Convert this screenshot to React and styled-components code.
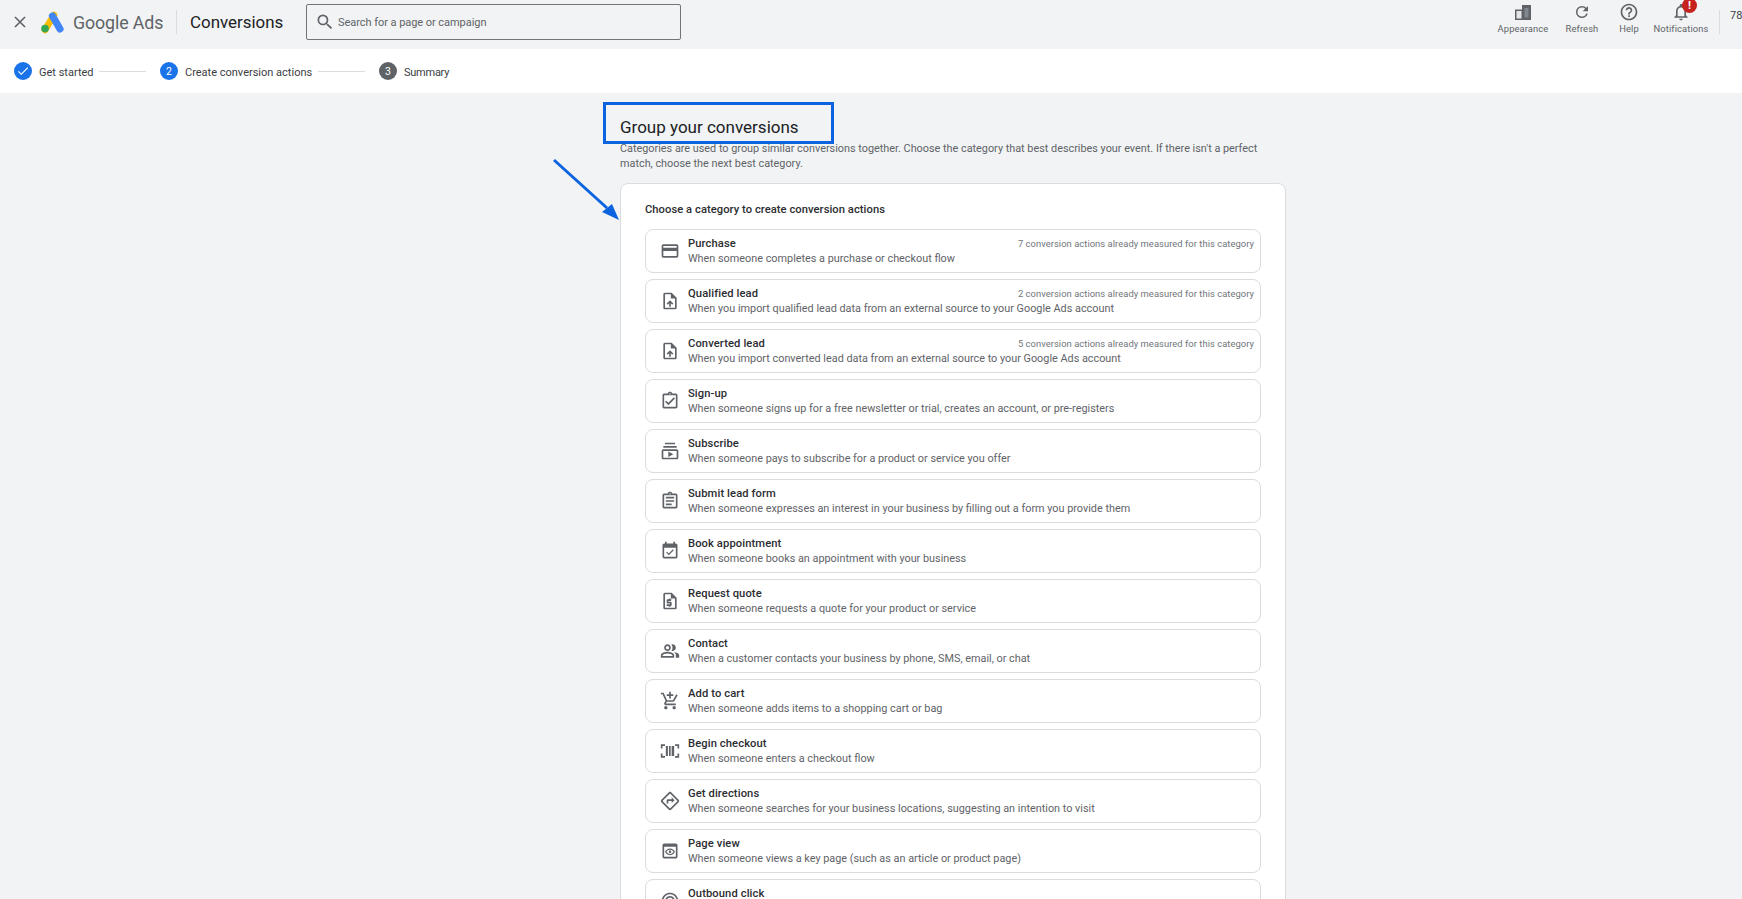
import React from "react";
import styled, { createGlobalStyle } from "styled-components";

const Global = createGlobalStyle`
  html, body { margin: 0; padding: 0; height: 100%; overflow: hidden; background: #f1f3f4; }
  body { font-family: Roboto, "Liberation Sans", sans-serif; color: #3c4043; }
  #root { height: 899px; overflow: hidden; position: relative; }
`;

const Page = styled.div`display: flex; flex-direction: column; height: 899px; overflow: hidden; position: relative;`;
const TopBar = styled.header`
  height: 49px; box-sizing: border-box; flex: none; display: flex; align-items: center; background: #f1f3f4; padding: 0 0 5px 12px;
`;
const CloseBtn = styled.span`display: flex; width: 16px; color: #5f6368; margin-right: 12px;`;
const LogoSlot = styled.span`display: flex; width: 24px; margin-right: 9px;`;
const Brand = styled.span`font-size: 17.8px; color: #5f6368; letter-spacing: -0.1px; width: 90px; white-space: nowrap;`;
const VRule = styled.span`width: 1px; height: 24px; background: #dadce0; margin: 0 13px;`;
const PageName = styled.span`font-size: 16.9px; color: #202124; width: 92px; white-space: nowrap;`;
const Search = styled.div`
  margin-left: 24px; width: 375px; height: 36px; box-sizing: border-box; border: 1px solid #70757a; border-radius: 2px;
  display: flex; align-items: center; padding-left: 8px; gap: 3px; font-size: 11px; letter-spacing: -0.05px; color: #5f6368;
`;
const Tools = styled.div`margin-left: auto; display: flex; align-items: flex-start; height: 44px;`;
const Tool = styled.div`
  position: relative; width: ${p => p.$w}px; display: flex; flex-direction: column; align-items: center;
  font-size: 9.4px; color: #5f6368; padding-top: 2px; white-space: nowrap; letter-spacing: 0.1px; gap: 1px;
`;
const ToolIcon = styled.span`display: flex; height: 20px; align-items: center;`;
const Badge = styled.span`
  position: absolute; top: -2px; left: 31px; width: 15px; height: 15px; border-radius: 50%; background: #c5221f; color: #fff;
  font-size: 11px; font-weight: 700; display: flex; align-items: center; justify-content: center;
`;
const ToolRule = styled.span`width: 1px; height: 24px; background: #dadce0; margin: 10px 10px 0 8px;`;
const Account = styled.span`font-size: 11px; line-height: 13px; color: #3c4043; padding-top: 9px; white-space: nowrap; width: 12px;`;

const Stepper = styled.nav`
  height: 44px; flex: none; background: #fff; display: flex; align-items: center; padding-left: 14px; font-size: 11px; color: #3c4043;
`;
const StepDot = styled.span`
  width: 18px; height: 18px; border-radius: 50%; background: ${p => p.$bg}; color: #fff; font-size: 10.5px;
  display: flex; align-items: center; justify-content: center; margin-right: 7px;
`;
const StepName = styled.span`white-space: nowrap; width: ${p => p.$w}px; letter-spacing: ${p => p.$ls || 0}px; position: relative; top: 1px;`;
const StepLine = styled.span`width: 47px; height: 1px; background: #dadce0; margin: 0 14px 0 6px;`;

const Main = styled.main`flex: 1; padding-left: 620px; width: 666px; position: relative;`;
const Title = styled.h1`
  margin: 23px 0 0; font-size: 17px; line-height: 22px; font-weight: 400; color: #202124; font-family: Roboto, sans-serif;
`;
const Lead = styled.p`margin: 3px 0 0; width: 666px; font-size: 10.85px; line-height: 15px; color: #5f6368;`;
const Card = styled.section`
  box-sizing: border-box; width: 666px; margin-top: 12px; background: #fff; border: 1px solid #dadce0; border-radius: 8px; padding: 18px 24px 24px;
`;
const CardTitle = styled.h2`margin: 0 0 11px; font-size: 11.2px; line-height: 16px; font-weight: 500; color: #2b2d30; letter-spacing: 0.05px;`;
const List = styled.div`display: flex; flex-direction: column; gap: 6px;`;
const Row = styled.div`
  box-sizing: border-box; height: 44px; border: 1px solid #dadce0; border-radius: 8px; display: flex; align-items: center; padding: 0 6px 0 14px; position: relative;
`;
const RowIcon = styled.span`display: flex; width: 20px; color: #5f6368; margin-right: 8px; flex: none;`;
const RowText = styled.div`flex: 1; min-width: 0;`;
const RowHead = styled.div`display: flex; justify-content: space-between; align-items: center; height: 15px;`;
const RowName = styled.span`font-size: 11.2px; font-weight: 500; color: #2b2d30; line-height: 15px; letter-spacing: 0.1px;`;
const RowNote = styled.span`font-size: 9.4px; color: #70757a; letter-spacing: 0.05px;`;
const RowDesc = styled.div`font-size: 10.85px; color: #5f6368; line-height: 15px;`;

const Callout = styled.div`
  position: absolute; left: 603px; top: 9px; width: 231px; height: 42px; box-sizing: border-box; border: 3px solid #0b63e0; pointer-events: none;
`;
const Arrow = styled.svg`position: absolute; left: 550px; top: 65px; pointer-events: none;`;

const Icon = ({ d, size = 20, fill = "currentColor" }) => (
  <svg width={size} height={size} viewBox="0 0 24 24" fill={fill}><path d={d} /></svg>
);

const ICONS = {
  card: "M20 4H4c-1.11 0-1.99.89-1.99 2L2 18c0 1.11.89 2 2 2h16c1.11 0 2-.89 2-2V6c0-1.11-.89-2-2-2zm0 14H4v-6h16v6zm0-10H4V6h16v2z",
  upload: "M14 2H6c-1.1 0-1.99.9-1.99 2L4 20c0 1.1.89 2 1.99 2H18c1.1 0 2-.9 2-2V8l-6-6zm4 18H6V4h7v5h5v11zM8 15.01l1.41 1.41L11 14.84V19h2v-4.16l1.59 1.59L16 15.01 12.01 11z",
  signup: "M18 9l-1.41-1.42L10 14.17l-2.59-2.58L6 13l4 4zm1-6h-4.18C14.4 1.84 13.3 1 12 1c-1.3 0-2.4.84-2.82 2H5c-.14 0-.27.01-.4.04-.39.08-.74.28-1.01.55-.18.18-.33.4-.43.64-.1.23-.16.49-.16.77v14c0 .27.06.54.16.78s.25.45.43.64c.27.27.62.47 1.01.55.13.02.26.03.4.03h14c1.1 0 2-.9 2-2V5c0-1.1-.9-2-2-2zm-7-.25c.41 0 .75.34.75.75s-.34.75-.75.75-.75-.34-.75-.75.34-.75.75-.75zM19 19H5V5h14v14z",
  subs: "M4 6h16v2H4zm2-4h12v2H6zm14 8H4c-1.1 0-2 .9-2 2v8c0 1.1.9 2 2 2h16c1.1 0 2-.9 2-2v-8c0-1.1-.9-2-2-2zm0 10H4v-8h16v8zm-10-7.27v6.53L16 16z",
  form: "M7 15h7v2H7zm0-4h10v2H7zm0-4h10v2H7zm12-4h-4.18C14.4 1.84 13.3 1 12 1c-1.3 0-2.4.84-2.82 2H5c-.14 0-.27.01-.4.04-.39.08-.74.28-1.01.55-.18.18-.33.4-.43.64-.1.23-.16.49-.16.77v14c0 .27.06.54.16.78s.25.45.43.64c.27.27.62.47 1.01.55.13.02.26.03.4.03h14c1.1 0 2-.9 2-2V5c0-1.1-.9-2-2-2zm-7-.25c.41 0 .75.34.75.75s-.34.75-.75.75-.75-.34-.75-.75.34-.75.75-.75zM19 19H5V5h14v14z",
  event: "M16.53 11.06L15.47 10l-4.88 4.88-2.12-2.12-1.06 1.06L10.59 17l5.94-5.94zM19 3h-1V1h-2v2H8V1H6v2H5c-1.11 0-1.99.9-1.99 2L3 19c0 1.1.89 2 2 2h14c1.1 0 2-.9 2-2V5c0-1.1-.9-2-2-2zm0 16H5V8h14v11z",
  quote: "M14 2H6c-1.1 0-1.99.9-1.99 2L4 20c0 1.1.89 2 1.99 2H18c1.1 0 2-.9 2-2V8l-6-6zm4 18H6V4h7v5h5v11zM13 12h-3v1h3c.55 0 1 .45 1 1v3c0 .55-.45 1-1 1h-.5v1h-2v-1H8v-2h4v-1H9c-.55 0-1-.45-1-1v-3c0-.55.45-1 1-1h1.5v-1h2v1H14z",
  people: "M16.67 13.13C18.04 14.06 19 15.32 19 17v3h4v-3c0-2.18-3.57-3.47-6.33-3.87zM15 12c2.21 0 4-1.79 4-4s-1.79-4-4-4c-.47 0-.91.1-1.33.24C14.5 5.27 15 6.58 15 8s-.5 2.73-1.33 3.76c.42.14.86.24 1.33.24zM9 12c2.21 0 4-1.79 4-4s-1.79-4-4-4-4 1.79-4 4 1.79 4 4 4zm0-6c1.1 0 2 .9 2 2s-.9 2-2 2-2-.9-2-2 .9-2 2-2zM9 13c-2.67 0-8 1.34-8 4v3h16v-3c0-2.66-5.33-4-8-4zm6 5H3v-.99C3.2 16.29 6.3 15 9 15s5.8 1.29 6 2v1z",
  cart: "M11 9h2V6h3V4h-3V1h-2v3H8v2h3v3zm-4 9c-1.1 0-1.99.9-1.99 2S5.9 22 7 22s2-.9 2-2-.9-2-2-2zm10 0c-1.1 0-1.99.9-1.99 2s.89 2 1.99 2 2-.9 2-2-.9-2-2-2zm-9.83-3.25l.03-.12.9-1.63h7.45c.75 0 1.41-.41 1.75-1.03l3.86-7.01L19.42 4h-.01l-1.1 2-2.76 5H8.53l-.13-.27L6.16 6l-.95-2-.94-2H1v2h2l3.6 7.59-1.35 2.45c-.16.28-.25.61-.25.96 0 1.1.9 2 2 2h12v-2H7.42c-.13 0-.25-.11-.25-.25z",
  barcode: "M1 4h5v2H3v3H1zm17 0h5v5h-2V6h-3zM1 15h2v3h3v2H1zm20 0h2v5h-5v-2h3zM7 6h2.5v12H7zm3.8 0h2v12h-2zm3.2 0H17v12h-3z",
  directions: "M22.43 10.59l-9.01-9.01c-.75-.75-2.07-.76-2.83 0l-9 9c-.78.78-.78 2.04 0 2.82l9 9c.39.39.9.58 1.41.58.51 0 1.02-.19 1.41-.58l8.99-8.99c.79-.76.8-2.02.03-2.82zm-10.42 10.4l-9-9 9-9 9 9-9 9zM8 11v4h2v-3h4v2.5l3.5-3.5L14 7.5V10H9c-.55 0-1 .45-1 1z",
  preview: "M19 3H5c-1.11 0-2 .9-2 2v14c0 1.1.89 2 2 2h14c1.1 0 2-.9 2-2V5c0-1.1-.89-2-2-2zm0 16H5V7h14v12zm-7-8.5c1.84 0 3.48.96 4.34 2.5-.86 1.54-2.5 2.5-4.34 2.5s-3.48-.96-4.34-2.5c.86-1.54 2.5-2.5 4.34-2.5M12 9c-2.73 0-5.06 1.66-6 4 .94 2.34 3.27 4 6 4s5.06-1.66 6-4c-.94-2.34-3.27-4-6-4zm0 5.5c-.83 0-1.5-.67-1.5-1.5s.67-1.5 1.5-1.5 1.5.67 1.5 1.5-.67 1.5-1.5 1.5z",
  click: "M11.71 17.99C8.53 17.85 6 15.22 6 12c0-3.31 2.69-6 6-6 3.22 0 5.85 2.53 5.99 5.71l-2.1-.63C15.48 9.31 13.89 8 12 8c-2.21 0-4 1.79-4 4 0 1.89 1.31 3.48 3.08 3.89l.63 2.1zM22 12c0 .3-.01.6-.04.9l-1.97-.59c.01-.1.01-.21.01-.31 0-4.42-3.58-8-8-8s-8 3.58-8 8 3.58 8 8 8c.1 0 .21 0 .31-.01l.59 1.97c-.3.03-.6.04-.9.04-5.52 0-10-4.48-10-10S6.48 2 12 2s10 4.48 10 10zm-3.77 4.26L22 15l-10-3 3 10 1.26-3.77 4.27 4.27 1.98-1.98-4.28-4.26z",
};

const rows = [
  ["card", "Purchase", "When someone completes a purchase or checkout flow", 7],
  ["upload", "Qualified lead", "When you import qualified lead data from an external source to your Google Ads account", 2],
  ["upload", "Converted lead", "When you import converted lead data from an external source to your Google Ads account", 5],
  ["signup", "Sign-up", "When someone signs up for a free newsletter or trial, creates an account, or pre-registers"],
  ["subs", "Subscribe", "When someone pays to subscribe for a product or service you offer"],
  ["form", "Submit lead form", "When someone expresses an interest in your business by filling out a form you provide them"],
  ["event", "Book appointment", "When someone books an appointment with your business"],
  ["quote", "Request quote", "When someone requests a quote for your product or service"],
  ["people", "Contact", "When a customer contacts your business by phone, SMS, email, or chat"],
  ["cart", "Add to cart", "When someone adds items to a shopping cart or bag"],
  ["barcode", "Begin checkout", "When someone enters a checkout flow"],
  ["directions", "Get directions", "When someone searches for your business locations, suggesting an intention to visit"],
  ["preview", "Page view", "When someone views a key page (such as an article or product page)"],
  ["click", "Outbound click", "When someone clicks a link that leads to another website"],
];

const GoogleAdsLogo = () => (
  <svg width="24" height="24" viewBox="0 0 24 24">
    <path d="M14 5 L5 20" stroke="#fbbc04" strokeWidth="6.6" strokeLinecap="round" />
    <path d="M12.5 6 L20 19" stroke="#4285f4" strokeWidth="7.2" strokeLinecap="round" />
    <circle cx="5" cy="18.6" r="3.8" fill="#34a853" />
  </svg>
);

export default function App() {
  return (
    <Page>
      <Global />
      <TopBar>
        <CloseBtn>
          <svg width="16" height="16" viewBox="0 0 16 16" fill="none" stroke="currentColor" strokeWidth="1.6"><path d="M3 3l10 10M13 3L3 13" /></svg>
        </CloseBtn>
        <LogoSlot><GoogleAdsLogo /></LogoSlot>
        <Brand>Google Ads</Brand>
        <VRule />
        <PageName>Conversions</PageName>
        <Search>
          <svg width="20" height="20" viewBox="0 0 24 24" fill="#5f6368"><path d="M15.5 14h-.79l-.28-.27A6.47 6.47 0 0 0 16 9.5 6.5 6.5 0 1 0 9.5 16c1.61 0 3.09-.59 4.23-1.57l.27.28v.79l5 4.99L20.49 19l-4.99-5zm-6 0C7.01 14 5 11.99 5 9.5S7.01 5 9.5 5 14 7.01 14 9.5 11.99 14 9.5 14z" /></svg>
          Search for a page or campaign
        </Search>
        <Tools>
          <Tool $w={68}>
            <ToolIcon>
              <svg width="16" height="15" viewBox="0 0 16 15"><path d="M.75 5.25h6.5v9H.75z" fill="#e4e6e8" stroke="#5f6368" strokeWidth="1.5" /><path d="M7 0h9v15H7z" fill="#5f6368" /><path d="M9.5 3h4v9.5h-4z" fill="#80868b" /></svg>
            </ToolIcon>
            Appearance
          </Tool>
          <Tool $w={50}>
            <ToolIcon>
              <svg width="18" height="18" viewBox="0 0 24 24" fill="#5f6368"><path d="M17.65 6.35A7.96 7.96 0 0 0 12 4a8 8 0 1 0 7.73 10h-2.08A6 6 0 1 1 12 6c1.66 0 3.14.69 4.22 1.78L13 11h7V4l-2.35 2.35z" /></svg>
            </ToolIcon>
            Refresh
          </Tool>
          <Tool $w={44}>
            <ToolIcon>
              <Icon size={20} fill="#5f6368" d="M11 18h2v-2h-2v2zm1-16C6.48 2 2 6.48 2 12s4.48 10 10 10 10-4.48 10-10S17.52 2 12 2zm0 18c-4.41 0-8-3.59-8-8s3.59-8 8-8 8 3.59 8 8-3.59 8-8 8zm0-14c-2.21 0-4 1.79-4 4h2c0-1.1.9-2 2-2s2 .9 2 2c0 2-3 1.75-3 5h2c0-2.25 3-2.5 3-5 0-2.21-1.79-4-4-4z" />
            </ToolIcon>
            Help
          </Tool>
          <Tool $w={60}>
            <ToolIcon>
              <Icon size={20} fill="#5f6368" d="M12 22c1.1 0 2-.9 2-2h-4c0 1.1.9 2 2 2zm6-6v-5c0-3.07-1.63-5.64-4.5-6.32V4c0-.83-.67-1.5-1.5-1.5s-1.5.67-1.5 1.5v.68C7.64 5.36 6 7.92 6 11v5l-2 2v1h16v-1l-2-2zm-2 1H8v-6c0-2.48 1.51-4.5 4-4.5s4 2.02 4 4.5v6z" />
            </ToolIcon>
            Notifications
            <Badge>!</Badge>
          </Tool>
          <ToolRule />
          <Account>784</Account>
        </Tools>
      </TopBar>

      <Stepper>
        <StepDot $bg="#1a73e8">
          <svg width="14" height="14" viewBox="0 0 24 24" fill="#fff"><path d="M9 16.17 4.83 12l-1.42 1.41L9 19 21 7l-1.41-1.41z" /></svg>
        </StepDot>
        <StepName $w={54}>Get started</StepName>
        <StepLine />
        <StepDot $bg="#1a73e8">2</StepDot>
        <StepName $w={127}>Create conversion actions</StepName>
        <StepLine />
        <StepDot $bg="#5f6368">3</StepDot>
        <StepName $w={46} $ls={-0.25}>Summary</StepName>
      </Stepper>

      <Main>
        <Title>Group your conversions</Title>
        <Lead>Categories are used to group similar conversions together. Choose the category that best describes your event. If there isn't a perfect match, choose the next best category.</Lead>
        <Card>
          <CardTitle>Choose a category to create conversion actions</CardTitle>
          <List>
            {rows.map(([icon, name, desc, count]) => (
              <Row key={name}>
                <RowIcon><Icon d={ICONS[icon]} /></RowIcon>
                <RowText>
                  <RowHead>
                    <RowName>{name}</RowName>
                    {count && <RowNote>{count} conversion actions already measured for this category</RowNote>}
                  </RowHead>
                  <RowDesc>{desc}</RowDesc>
                </RowText>
              </Row>
            ))}
          </List>
        </Card>
        <Callout />
        <Arrow width="72" height="70" viewBox="0 0 72 70">
          <path d="M4 2 L57 50" stroke="#0b63e0" strokeWidth="3" />
          <path d="M69 62 L62 46 L52 54 Z" fill="#0b63e0" />
        </Arrow>
      </Main>
    </Page>
  );
}
